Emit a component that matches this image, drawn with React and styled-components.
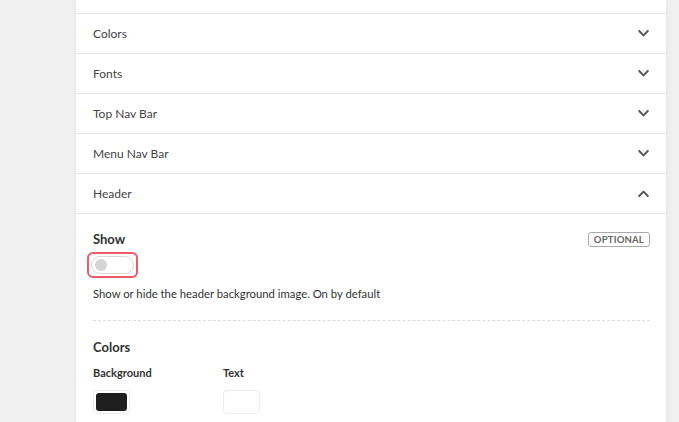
import React from "react";
import styled, { createGlobalStyle } from "styled-components";

const Global = createGlobalStyle`
  html, body { margin: 0; padding: 0; background: #f0f0f0; }
  body { font-family: Lato, "Open Sans", sans-serif; color: #333; }
`;

const Page = styled.div`
  width: 679px;
  height: 422px;
  overflow: hidden;
  display: flex;
`;

const Panel = styled.div`
  margin-left: 76px;
  width: 590px;
  background: #fff;
  box-shadow: 0 0 4px rgba(0, 0, 0, 0.07);
  align-self: flex-start;
`;

const TopCap = styled.div`
  height: 13px;
  border-bottom: 1px solid #e4e4e4;
`;

const Row = styled.div`
  height: 39px;
  border-bottom: 1px solid #e4e4e4;
  display: flex;
  align-items: center;
  justify-content: space-between;
  padding: 0 16px 0 17px;
  font-size: 12px;
  color: #444;
`;

const Chevron = ({ up }) => (
  <svg width="11" height="7" viewBox="0 0 11 7" style={{ marginRight: 1 }}>
    <polyline
      points={up ? "1.2,6 5.5,1.6 9.8,6" : "1.2,1 5.5,5.4 9.8,1"}
      fill="none"
      stroke="#555"
      strokeWidth="1.9"
      strokeLinecap="round"
      strokeLinejoin="round"
    />
  </svg>
);

const Body = styled.div`
  padding: 17px 16px 20px 17px;
`;

const FieldHead = styled.div`
  display: flex;
  justify-content: space-between;
  align-items: center;
  height: 16px;
`;

const Title = styled.div`
  font-size: 13px;
  font-weight: 700;
  color: #333;
  line-height: 16px;
`;

const Badge = styled.span`
  font-size: 9.5px;
  font-weight: 700;
  color: #666;
  border: 1px solid #aaa;
  border-radius: 3px;
  padding: 0 5px;
  line-height: 13px;
  letter-spacing: 0.2px;
`;

const FocusRing = styled.span`
  display: inline-flex;
  margin-top: 5px;
  margin-left: -6px;
  padding: 2px;
  border: 2px solid #ec5a66;
  border-radius: 6px;
`;

const Toggle = styled.span`
  width: 36px;
  height: 16px;
  border: 1px solid #d8d8d8;
  border-radius: 9px;
  background: #fff;
  display: flex;
  align-items: center;
  padding-left: 3px;
  padding-right: 2px;
  box-sizing: content-box;
`;

const Knob = styled.span`
  width: 12px;
  height: 12px;
  border-radius: 50%;
  background: #d4d4d4;
`;

const Desc = styled.div`
  margin-top: 9px;
  font-size: 11.3px;
  line-height: 14px;
  color: #333;
`;

const Divider = styled.div`
  margin-top: 19px;
  border-top: 1px dashed #dcdcdc;
`;

const Section = styled(Title)`
  margin-top: 18px;
`;

const Grid = styled.div`
  display: grid;
  grid-template-columns: 130px 130px;
  margin-top: 11px;
`;

const Label = styled.div`
  font-size: 11px;
  font-weight: 700;
  color: #333;
  line-height: 14px;
`;

const Swatch = styled.div`
  margin-top: 10px;
  width: 31px;
  height: 18px;
  padding: 2px;
  border: 1px solid #ececec;
  border-radius: 4px;
  & > span {
    display: block;
    width: 100%;
    height: 100%;
    border-radius: 3px;
    background: ${(p) => p.$color};
  }
`;

const rows = ["Colors", "Fonts", "Top Nav Bar", "Menu Nav Bar"];

export default function App() {
  return (
    <>
      <Global />
      <Page>
        <Panel>
          <TopCap />
          {rows.map((r) => (
            <Row key={r}>
              <span>{r}</span>
              <Chevron />
            </Row>
          ))}
          <Row>
            <span>Header</span>
            <Chevron up />
          </Row>
          <Body>
            <FieldHead>
              <Title>Show</Title>
              <Badge>OPTIONAL</Badge>
            </FieldHead>
            <FocusRing>
              <Toggle>
                <Knob />
              </Toggle>
            </FocusRing>
            <Desc>Show or hide the header background image. On by default</Desc>
            <Divider />
            <Section>Colors</Section>
            <Grid>
              <div>
                <Label>Background</Label>
                <Swatch $color="#1e1e1e">
                  <span />
                </Swatch>
              </div>
              <div>
                <Label>Text</Label>
                <Swatch $color="#fff">
                  <span />
                </Swatch>
              </div>
            </Grid>
          </Body>
        </Panel>
      </Page>
    </>
  );
}
